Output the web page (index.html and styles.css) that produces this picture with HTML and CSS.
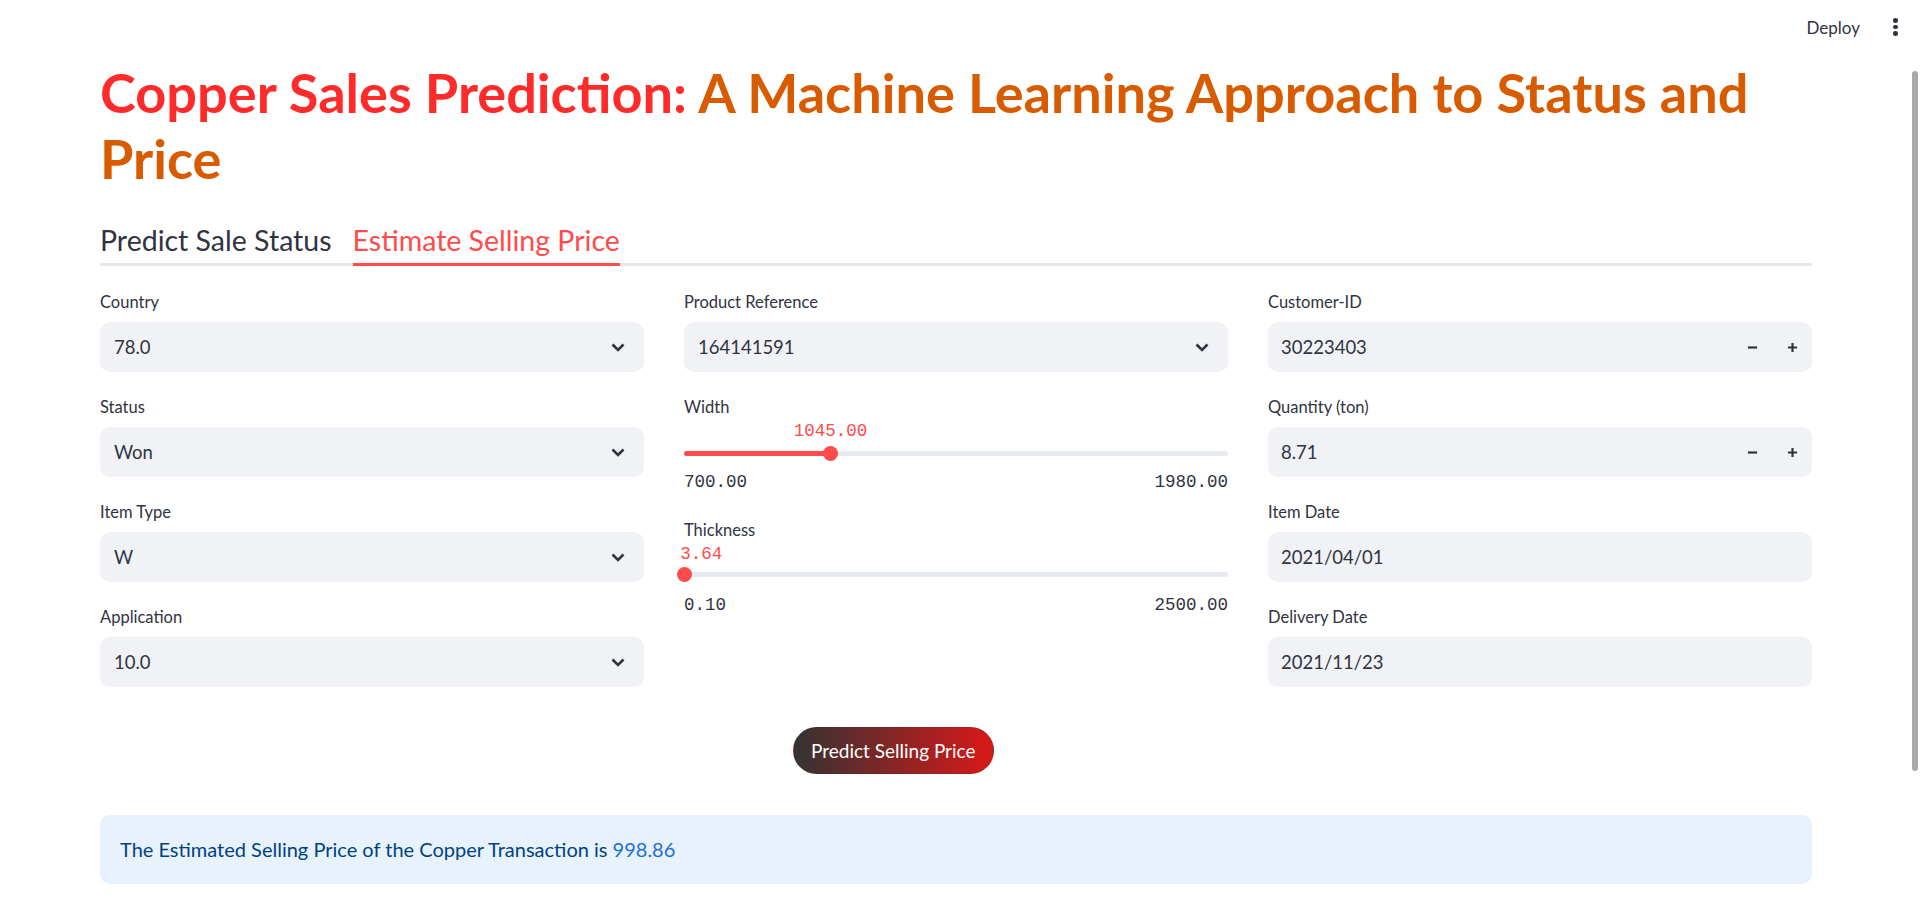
FILE: index.html
```html
<!DOCTYPE html>
<html lang="en">
<head>
<meta charset="utf-8">
<title>Copper Sales Prediction</title>
<link rel="stylesheet" href="styles.css">
</head>
<body>
<header class="topbar">
  <span class="deploy">Deploy</span>
  <span class="kebab"><i></i><i></i><i></i></span>
</header>
<div class="scroll-thumb"></div>
<main class="page">
  <h1 class="title"><span class="t-red">Copper Sales Prediction:</span> <span class="t-orange">A Machine Learning Approach to Status and</span> <span class="t-orange">Price</span></h1>

  <nav class="tabs">
    <div class="tab">Predict Sale Status</div>
    <div class="tab active">Estimate Selling Price</div>
  </nav>

  <section class="panel">
    <div class="grid">
      <div class="col">
        <div class="field">
          <label class="lbl">Country</label>
          <div class="select"><span>78.0</span><svg class="chev" viewBox="0 0 24 24"><path d="M6.5 9.5L12 15l5.5-5.5"/></svg></div>
        </div>
        <div class="field">
          <label class="lbl">Status</label>
          <div class="select"><span>Won</span><svg class="chev" viewBox="0 0 24 24"><path d="M6.5 9.5L12 15l5.5-5.5"/></svg></div>
        </div>
        <div class="field">
          <label class="lbl">Item Type</label>
          <div class="select"><span>W</span><svg class="chev" viewBox="0 0 24 24"><path d="M6.5 9.5L12 15l5.5-5.5"/></svg></div>
        </div>
        <div class="field">
          <label class="lbl">Application</label>
          <div class="select"><span>10.0</span><svg class="chev" viewBox="0 0 24 24"><path d="M6.5 9.5L12 15l5.5-5.5"/></svg></div>
        </div>
      </div>

      <div class="col">
        <div class="field">
          <label class="lbl">Product Reference</label>
          <div class="select"><span>164141591</span><svg class="chev" viewBox="0 0 24 24"><path d="M6.5 9.5L12 15l5.5-5.5"/></svg></div>
        </div>
        <div class="field">
          <label class="lbl">Width</label>
          <div class="slider">
            <div class="track">
              <div class="fill" style="width:26.95%"></div>
              <div class="thumb" style="left:26.95%"><span class="val">1045.00</span></div>
            </div>
            <div class="ticks"><span>700.00</span><span>1980.00</span></div>
          </div>
        </div>
        <div class="field">
          <label class="lbl">Thickness</label>
          <div class="slider slider-tight">
            <div class="track">
              <div class="fill" style="width:0.14%"></div>
              <div class="thumb" style="left:0.14%"><span class="val val-start">3.64</span></div>
            </div>
            <div class="ticks"><span>0.10</span><span>2500.00</span></div>
          </div>
        </div>
      </div>

      <div class="col">
        <div class="field">
          <label class="lbl">Customer-ID</label>
          <div class="number">
            <span class="num-val">30223403</span>
            <span class="step"><svg viewBox="0 0 12 12"><path d="M1 6h10"/></svg></span>
            <span class="step"><svg viewBox="0 0 12 12"><path d="M1 6h10M6 1v10"/></svg></span>
          </div>
        </div>
        <div class="field">
          <label class="lbl">Quantity (ton)</label>
          <div class="number">
            <span class="num-val">8.71</span>
            <span class="step"><svg viewBox="0 0 12 12"><path d="M1 6h10"/></svg></span>
            <span class="step"><svg viewBox="0 0 12 12"><path d="M1 6h10M6 1v10"/></svg></span>
          </div>
        </div>
        <div class="field">
          <label class="lbl">Item Date</label>
          <div class="date">2021/04/01</div>
        </div>
        <div class="field">
          <label class="lbl">Delivery Date</label>
          <div class="date">2021/11/23</div>
        </div>
      </div>
    </div>

    <div class="btn-row">
      <button class="predict">Predict Selling Price</button>
    </div>

    <div class="info">The Estimated Selling Price of the Copper Transaction is <span class="price">998.86</span></div>
  </section>
</main>
</body>
</html>
```

FILE: styles.css
```css
* { box-sizing: border-box; }

html, body {
  margin: 0;
  padding: 0;
  background: #ffffff;
  color: #31333f;
  font-family: Lato, "Noto Sans", sans-serif;
  overflow: hidden;
}

.topbar {
  height: 54px;
  display: flex;
  align-items: center;
  justify-content: flex-end;
  padding-right: 22px;
  gap: 33px;
}

.deploy {
  font-size: 17px;
  color: #31333f;
}

.kebab {
  display: flex;
  flex-direction: column;
  gap: 2px;
  width: 5px;
}

.kebab i {
  display: block;
  width: 4.5px;
  height: 4.5px;
  border-radius: 50%;
  background: #31333f;
}

.scroll-thumb {
  position: absolute;
  right: 2px;
  top: 71px;
  width: 6px;
  height: 700px;
  border-radius: 3px;
  background: #a9a9ac;
}

.page {
  padding: 0 108px 0 100px;
}

.title {
  margin: 6px 0 0;
  font-size: 54.1px;
  line-height: 66px;
  font-weight: 700;
  color: #d95b00;
}

.t-red { color: #ff2b2b; }
.t-orange { color: #d95b00; }

.tabs {
  margin-top: 24px;
  display: flex;
  gap: 21px;
  box-shadow: inset 0 -3px 0 #e8e8ec;
}

.tab {
  height: 50px;
  display: flex;
  align-items: center;
  font-size: 28.5px;
  color: #31333f;
  padding-bottom: 2px;
}

.tab.active {
  color: #ff4b4b;
  box-shadow: inset 0 -3px 0 #ff4b4b;
}

.panel {
  padding-top: 21px;
}

.grid {
  display: grid;
  grid-template-columns: repeat(3, 1fr);
  column-gap: 40px;
}

.col {
  display: flex;
  flex-direction: column;
  gap: 20px;
}

.lbl {
  display: flex;
  align-items: center;
  height: 30px;
  margin-bottom: 5px;
  font-size: 16.5px;
  color: #31333f;
}

.select, .number, .date {
  height: 50px;
  border-radius: 10px;
  background: #f0f2f6;
  display: flex;
  align-items: center;
  font-size: 18.5px;
  color: #31333f;
}

.select {
  padding: 0 14px 0 14px;
  justify-content: space-between;
}

.chev {
  width: 24px;
  height: 24px;
  fill: none;
  stroke: #31333f;
  stroke-width: 2.6;
}

.number {
  padding-left: 13px;
}

.num-val { flex: 1; }

.step {
  width: 40px;
  height: 50px;
  display: flex;
  align-items: center;
  justify-content: center;
}

.step svg {
  width: 11px;
  height: 11px;
  stroke: #31333f;
  stroke-width: 2.4;
  fill: none;
}

.date {
  padding-left: 13px;
}

.slider {
  height: 68px;
  padding-top: 23.5px;
}

.slider-tight {
  padding-top: 21.5px;
}

.slider-tight .ticks {
  margin-top: 18px;
}

.track {
  position: relative;
  height: 5px;
  border-radius: 3px;
  background: #e6e9ef;
}

.fill {
  height: 5px;
  border-radius: 3px;
  background: #ff4b4b;
}

.thumb {
  position: absolute;
  top: -5px;
  width: 15px;
  height: 15px;
  margin-left: -7.5px;
  border-radius: 50%;
  background: #ff4b4b;
}

.val {
  position: absolute;
  bottom: 100%;
  left: 50%;
  transform: translateX(-50%);
  margin-bottom: 5px;
  font-family: "Liberation Mono", "DejaVu Sans Mono", monospace;
  font-size: 17.5px;
  line-height: 20px;
  color: #ff4b4b;
  white-space: nowrap;
}

.slider-tight .val {
  margin-bottom: 3px;
}

.val.val-start {
  left: 3px;
  transform: none;
}

.ticks {
  margin-top: 16px;
  display: flex;
  justify-content: space-between;
  font-family: "Liberation Mono", "DejaVu Sans Mono", monospace;
  font-size: 17.5px;
  line-height: 20px;
  color: #31333f;
}

.btn-row {
  margin-top: 40px;
  padding-left: 693px;
}

.predict {
  height: 47px;
  padding: 0 17px;
  border: 1px solid rgba(49, 51, 63, 0.2);
  border-radius: 24px;
  background: linear-gradient(to right, #333333, #db1818);
  color: #ffffff;
  font-family: Lato, "Noto Sans", sans-serif;
  font-size: 19px;
}

.info {
  margin-top: 41px;
  padding: 20px 20px;
  line-height: 29px;
  border-radius: 10px;
  background: #e8f2fc;
  color: #004280;
  font-size: 20px;
}

.price { color: #1c6fd4; }
```
